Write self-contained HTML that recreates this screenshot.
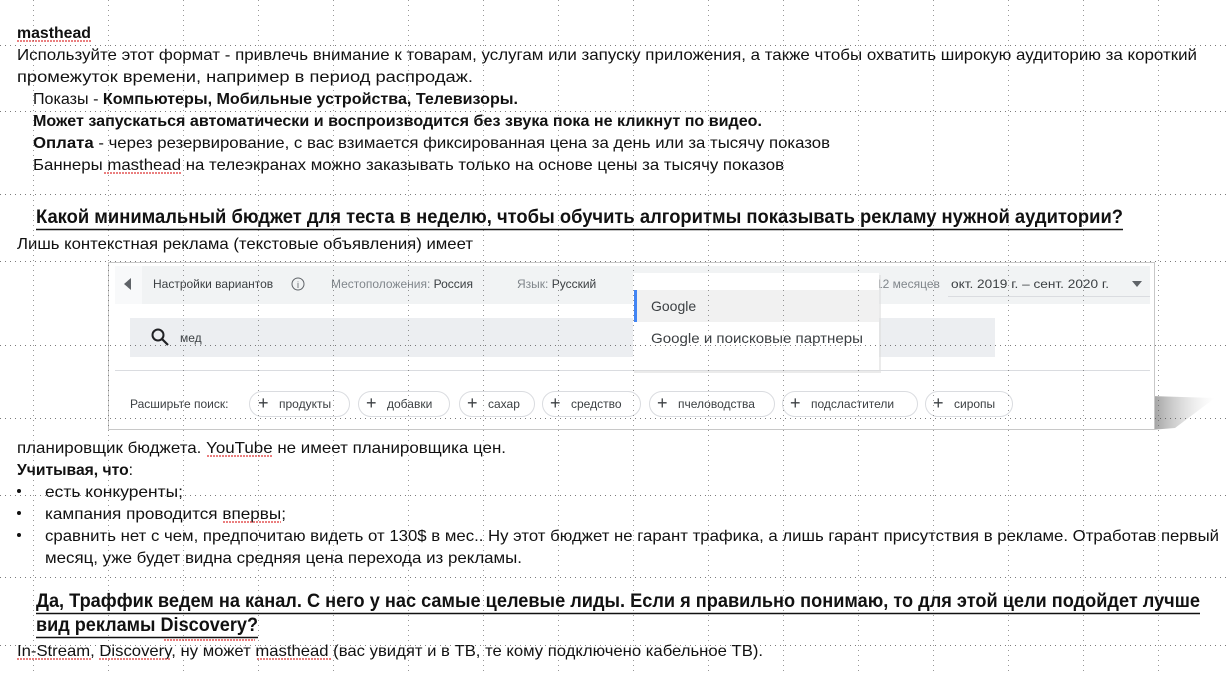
<!DOCTYPE html>
<html><head><meta charset="utf-8"><style>
html,body{margin:0;padding:0;background:#fff;width:1229px;height:673px;overflow:hidden}
svg{display:block}
.t{font-family:"Liberation Sans",sans-serif;font-size:16px;fill:#111}
.b{font-weight:bold}
.h{font-family:"Liberation Sans",sans-serif;font-size:19px;font-weight:bold;fill:#111}
.g{font-family:"Liberation Sans",sans-serif;font-size:12px;fill:#3c4043}
.gl{font-family:"Liberation Sans",sans-serif;font-size:12px;fill:#80868b}
.m{font-family:"Liberation Sans",sans-serif;font-size:14px;fill:#3c4043}
</style></head><body>
<svg width="1229" height="673" viewBox="0 0 1229 673" xmlns="http://www.w3.org/2000/svg">
<defs>
<linearGradient id="sh" x1="0" y1="0" x2="1" y2="0"><stop offset="0" stop-color="#999"/><stop offset="1" stop-color="#ddd" stop-opacity="0"/></linearGradient>
</defs>
<text class="t b" x="17" y="38" textLength="74" lengthAdjust="spacingAndGlyphs">masthead</text>
<text class="t" x="17" y="60" textLength="1180" lengthAdjust="spacingAndGlyphs">Используйте этот формат - привлечь внимание к товарам, услугам или запуску приложения, а также чтобы охватить широкую аудиторию за короткий</text>
<text class="t" x="17" y="82" textLength="456" lengthAdjust="spacingAndGlyphs">промежуток времени, например в период распродаж.</text>
<text class="t" x="33" y="104" textLength="485" lengthAdjust="spacingAndGlyphs">Показы - <tspan class="b">Компьютеры, Мобильные устройства, Телевизоры.</tspan></text>
<text class="t b" x="33" y="126" textLength="729" lengthAdjust="spacingAndGlyphs">Может запускаться автоматически и воспроизводится без звука пока не кликнут по видео.</text>
<text class="t" x="33" y="148" textLength="797" lengthAdjust="spacingAndGlyphs"><tspan class="b">Оплата</tspan> - через резервирование, с вас взимается фиксированная цена за день или за тысячу показов</text>
<text class="t" x="33" y="170" textLength="751" lengthAdjust="spacingAndGlyphs">Баннеры masthead на телеэкранах можно заказывать только на основе цены за тысячу показов</text>
<text class="h" x="36" y="223" textLength="1087" lengthAdjust="spacingAndGlyphs">Какой минимальный бюджет для теста в неделю, чтобы обучить алгоритмы показывать рекламу нужной аудитории?</text>
<line x1="36" y1="229.5" x2="1123" y2="229.5" stroke="#111" stroke-width="1.5"/>
<text class="t" x="17" y="249" textLength="456" lengthAdjust="spacingAndGlyphs">Лишь контекстная реклама (текстовые объявления) имеет</text>

<polygon points="1150,396 1215,398 1175,428 1150,430" fill="url(#sh)"/>
<rect x="108.5" y="262.5" width="1046" height="167" fill="#fff" stroke="#c8c8c8"/>
<rect x="115" y="266" width="1035" height="38" fill="#f1f3f4"/>
<rect x="115" y="266" width="27" height="38" fill="#f8f9fa"/>
<polygon points="131,278 131,290 124,284" fill="#5f6368"/>
<text class="g" x="153" y="288">Настройки вариантов</text>
<circle cx="298" cy="284" r="6" fill="none" stroke="#5f6368"/>
<text x="298" y="288" font-family="Liberation Sans" font-size="9" fill="#5f6368" text-anchor="middle">i</text>
<text class="gl" x="331" y="288">Местоположения: <tspan fill="#3c4043">Россия</tspan></text>
<text class="gl" x="517" y="288">Язык: <tspan fill="#3c4043">Русский</tspan></text>
<text class="gl" x="876" y="288">12 месяцев</text>
<text class="g" x="951" y="288" textLength="158" lengthAdjust="spacingAndGlyphs">окт. 2019 г. – сент. 2020 г.</text>
<polygon points="1132,281 1142,281 1137,287" fill="#5f6368"/>
<line x1="948" y1="296.5" x2="1150" y2="296.5" stroke="#dadce0"/>
<rect x="130" y="318" width="865" height="39" fill="#eceef1"/>
<circle cx="158" cy="335" r="5.5" fill="none" stroke="#202124" stroke-width="2"/>
<line x1="162" y1="339" x2="168" y2="345" stroke="#202124" stroke-width="2.2"/>
<text class="g" x="180" y="342">мед</text>
<line x1="115" y1="370.5" x2="1150" y2="370.5" stroke="#dadce0"/>
<text class="g" x="130" y="408">Расширьте поиск:</text>
<g font-family="Liberation Sans" font-size="12" fill="#3c4043">
<rect x="249.5" y="391.5" width="100" height="25" rx="12.5" fill="#fff" stroke="#dadce0"/><text x="258" y="409" font-size="18">+</text><text x="279" y="408">продукты</text>
<rect x="358.5" y="391.5" width="91" height="25" rx="12.5" fill="#fff" stroke="#dadce0"/><text x="366" y="409" font-size="18">+</text><text x="387" y="408">добавки</text>
<rect x="459.5" y="391.5" width="75" height="25" rx="12.5" fill="#fff" stroke="#dadce0"/><text x="467" y="409" font-size="18">+</text><text x="488" y="408">сахар</text>
<rect x="542.5" y="391.5" width="98" height="25" rx="12.5" fill="#fff" stroke="#dadce0"/><text x="550" y="409" font-size="18">+</text><text x="571" y="408">средство</text>
<rect x="649.5" y="391.5" width="125" height="25" rx="12.5" fill="#fff" stroke="#dadce0"/><text x="657" y="409" font-size="18">+</text><text x="678" y="408">пчеловодства</text>
<rect x="782.5" y="391.5" width="135" height="25" rx="12.5" fill="#fff" stroke="#dadce0"/><text x="790" y="409" font-size="18">+</text><text x="811" y="408">подсластители</text>
<rect x="925.5" y="391.5" width="87" height="25" rx="12.5" fill="#fff" stroke="#dadce0"/><text x="933" y="409" font-size="18">+</text><text x="954" y="408">сиропы</text>
</g>
<rect x="634" y="275" width="247" height="98" fill="#ddd" opacity="0.6"/>
<rect x="633" y="273" width="246" height="97" fill="#fff"/>
<rect x="636" y="290" width="243" height="32" fill="#f1f1f1"/>
<rect x="634" y="290" width="3" height="32" fill="#4285f4"/>
<text class="m" x="651" y="311">Google</text>
<text class="m" x="651" y="343" textLength="212" lengthAdjust="spacingAndGlyphs">Google и поисковые партнеры</text>

<text class="t" x="17" y="453" textLength="489" lengthAdjust="spacingAndGlyphs">планировщик бюджета. YouTube не имеет планировщика цен.</text>
<text class="t" x="17" y="475" textLength="116" lengthAdjust="spacingAndGlyphs"><tspan class="b">Учитывая, что</tspan>:</text>
<circle cx="19" cy="491" r="2" fill="#111"/><circle cx="19" cy="513" r="2" fill="#111"/><circle cx="19" cy="535" r="2" fill="#111"/>
<text class="t" x="45" y="497" textLength="138" lengthAdjust="spacingAndGlyphs">есть конкуренты;</text>
<text class="t" x="45" y="519" textLength="241" lengthAdjust="spacingAndGlyphs">кампания проводится впервы;</text>
<text class="t" x="45" y="541" textLength="1174" lengthAdjust="spacingAndGlyphs">сравнить нет с чем, предпочитаю видеть от 130$ в мес.. Ну этот бюджет не гарант трафика, а лишь гарант присутствия в рекламе.  Отработав первый</text>
<text class="t" x="45" y="563" textLength="477" lengthAdjust="spacingAndGlyphs">месяц, уже будет видна средняя цена перехода из рекламы.</text>
<text class="h" x="36" y="607" textLength="1164" lengthAdjust="spacingAndGlyphs">Да, Траффик ведем на канал. С него у нас самые целевые лиды. Если я правильно понимаю, то для этой цели подойдет лучше</text>
<line x1="36" y1="613.5" x2="1200" y2="613.5" stroke="#111" stroke-width="1.5"/>
<text class="h" x="36" y="631" textLength="222" lengthAdjust="spacingAndGlyphs">вид рекламы Discovery?</text>
<line x1="36" y1="637.5" x2="258" y2="637.5" stroke="#111" stroke-width="1.5"/>
<text class="t" x="17" y="656" textLength="746" lengthAdjust="spacingAndGlyphs">In-Stream, Discovery, ну может masthead (вас увидят и в ТВ, те кому подключено кабельное ТВ).</text>

<g stroke="#d33" stroke-width="1.2" stroke-dasharray="2 1" fill="none">
<line x1="17" y1="41" x2="91" y2="41"/>
<line x1="104" y1="173" x2="182" y2="173"/>
<line x1="207" y1="456" x2="272" y2="456"/>
<line x1="223" y1="522" x2="281" y2="522"/>
<line x1="164" y1="640" x2="255" y2="640"/>
<line x1="17" y1="659" x2="91" y2="659"/>
<line x1="99" y1="659" x2="170" y2="659"/>
<line x1="257" y1="659" x2="332" y2="659"/>
</g>

<g stroke="#444" stroke-width="1" stroke-dasharray="1 4" opacity="0.7">
<line x1="0" y1="45.5" x2="1229" y2="45.5"/>
<line x1="0" y1="111.5" x2="1229" y2="111.5"/>
<line x1="0" y1="194.5" x2="1229" y2="194.5"/>
<line x1="0" y1="261.5" x2="1229" y2="261.5"/>
<line x1="0" y1="345.5" x2="1229" y2="345.5"/>
<line x1="0" y1="418.5" x2="1229" y2="418.5"/>
<line x1="0" y1="495.5" x2="1229" y2="495.5"/>
<line x1="0" y1="577.5" x2="1229" y2="577.5"/>
<line x1="0" y1="645.5" x2="1229" y2="645.5"/>
</g>
<g stroke="#444" stroke-width="1" stroke-dasharray="1 4" opacity="0.55">
<line x1="33.5" y1="0" x2="33.5" y2="673"/>
<line x1="108.5" y1="0" x2="108.5" y2="673"/>
<line x1="183.5" y1="0" x2="183.5" y2="673"/>
<line x1="258.5" y1="0" x2="258.5" y2="673"/>
<line x1="333.5" y1="0" x2="333.5" y2="673"/>
<line x1="408.5" y1="0" x2="408.5" y2="673"/>
<line x1="483.5" y1="0" x2="483.5" y2="673"/>
<line x1="558.5" y1="0" x2="558.5" y2="673"/>
<line x1="633.5" y1="0" x2="633.5" y2="673"/>
<line x1="708.5" y1="0" x2="708.5" y2="673"/>
<line x1="783.5" y1="0" x2="783.5" y2="673"/>
<line x1="858.5" y1="0" x2="858.5" y2="673"/>
<line x1="933.5" y1="0" x2="933.5" y2="673"/>
<line x1="1008.5" y1="0" x2="1008.5" y2="673"/>
<line x1="1083.5" y1="0" x2="1083.5" y2="673"/>
<line x1="1158.5" y1="0" x2="1158.5" y2="673"/>
</g>
</svg>
</body></html>
